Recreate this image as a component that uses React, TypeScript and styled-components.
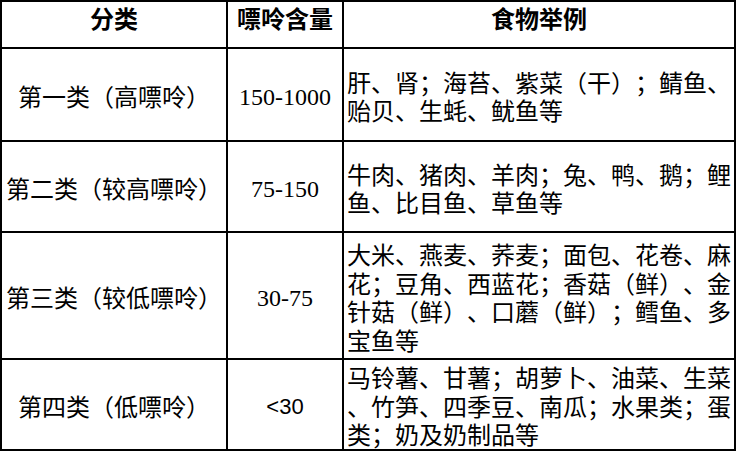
import React from "react";
import styled, { createGlobalStyle } from "styled-components";

const Global = createGlobalStyle`
  html, body { margin: 0; padding: 0; background: #fff; }
  body { font-family: "Noto Sans CJK SC", "Noto Sans", sans-serif; color: #000; }
`;

const Table = styled.table`
  border-collapse: separate;
  border-spacing: 0;
  table-layout: fixed;
  width: 736px;
  border-top: 2px solid #000;
  border-left: 2px solid #000;
  font-family: "Noto Sans CJK SC", sans-serif;
  font-size: 24px;
  font-weight: 400;
  line-height: 28.5px;
  text-spacing-trim: space-all;
  font-kerning: none;
  font-feature-settings: "halt" 0, "chws" 0, "palt" 0;
`;

const Row = styled.tr<{ $h: number }>`
  height: ${(p) => p.$h}px;
`;

const Cell = styled.td<{ $align?: "left" | "center" }>`
  border-right: 2px solid #000;
  border-bottom: 2px solid #000;
  padding: 3px 0 0 ${(p) => (p.$align === "left" ? "3px" : "0")};
  text-align: ${(p) => p.$align ?? "center"};
  vertical-align: middle;
  white-space: nowrap;
  overflow: hidden;
  box-sizing: border-box;
`;

const Head = styled.th`
  border-right: 2px solid #000;
  border-bottom: 2px solid #000;
  padding: 2px 0 0;
  text-align: center;
  vertical-align: top;
  font-weight: 700;
  white-space: nowrap;
  box-sizing: border-box;
`;

const Num = styled.span<{ $sans?: boolean }>`
  font-family: ${(p) => (p.$sans ? '"Liberation Sans", Arial' : '"Liberation Serif", "Times New Roman"')}, serif;
  font-size: ${(p) => (p.$sans ? "22px" : "24px")};
  font-weight: 400;
`;

const Line = styled.div`
  white-space: nowrap;
`;

const rows: { h: number; cat: string; num: React.ReactNode; lines: string[] }[] = [
  {
    h: 93,
    cat: "第一类（高嘌呤）",
    num: <Num>150-1000</Num>,
    lines: ["肝、肾；海苔、紫菜（干）；鲭鱼、", "贻贝、生蚝、鱿鱼等"],
  },
  {
    h: 91,
    cat: "第二类（较高嘌呤）",
    num: <Num>75-150</Num>,
    lines: ["牛肉、猪肉、羊肉；兔、鸭、鹅；鲤", "鱼、比目鱼、草鱼等"],
  },
  {
    h: 127,
    cat: "第三类（较低嘌呤）",
    num: <Num>30-75</Num>,
    lines: [
      "大米、燕麦、荞麦；面包、花卷、麻",
      "花；豆角、西蓝花；香菇（鲜）、金",
      "针菇（鲜）、口蘑（鲜）；鳕鱼、多",
      "宝鱼等",
    ],
  },
  {
    h: 91,
    cat: "第四类（低嘌呤）",
    num: <Num $sans>&lt;30</Num>,
    lines: [
      "马铃薯、甘薯；胡萝卜、油菜、生菜",
      "、竹笋、四季豆、南瓜；水果类；蛋",
      "类；奶及奶制品等",
    ],
  },
];

export default function App() {
  return (
    <>
      <Global />
      <Table>
        <colgroup>
          <col style={{ width: 226 }} />
          <col style={{ width: 116 }} />
          <col style={{ width: 392 }} />
        </colgroup>
        <thead>
          <Row $h={47}>
            <Head>分类</Head>
            <Head>嘌呤含量</Head>
            <Head>食物举例</Head>
          </Row>
        </thead>
        <tbody>
          {rows.map((r) => (
            <Row key={r.cat} $h={r.h}>
              <Cell>{r.cat}</Cell>
              <Cell>{r.num}</Cell>
              <Cell $align="left">
                {r.lines.map((l, i) => (
                  <Line key={i}>{l}</Line>
                ))}
              </Cell>
            </Row>
          ))}
        </tbody>
      </Table>
    </>
  );
}
